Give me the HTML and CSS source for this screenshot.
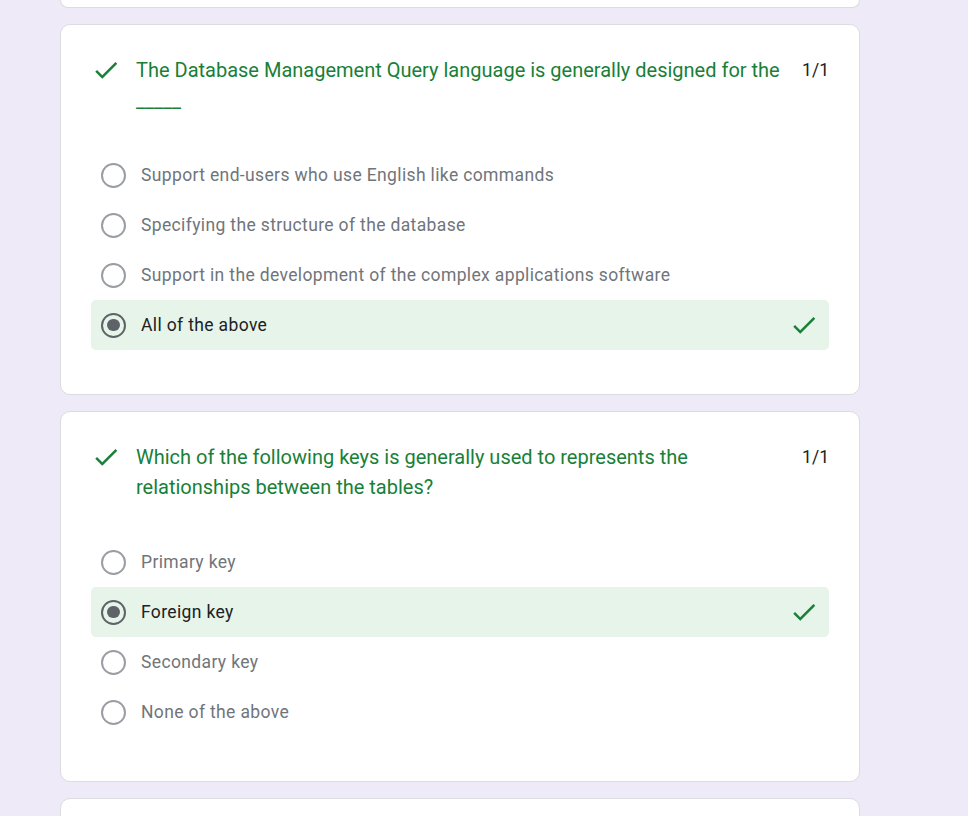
FILE: index.html
```html
<!DOCTYPE html>
<html lang="en">
<head>
<meta charset="utf-8">
<title>Quiz results</title>
<link rel="stylesheet" href="styles.css">
</head>
<body>
<main class="page">
  <section class="card card-clipped"></section>

  <section class="card">
    <div class="q-head">
      <svg class="q-mark" viewBox="0 0 24 24" aria-hidden="true"><path d="M9 16.17L4.830 12l-1.42 1.41L9 19 21 7l-1.41-1.41z"/></svg>
      <div class="q-title">The Database Management Query language is generally designed for the _____</div>
      <div class="q-points">1/1</div>
    </div>
    <div class="options">
      <div class="option"><span class="radio"></span><span class="opt-label">Support end-users who use English like commands</span></div>
      <div class="option"><span class="radio"></span><span class="opt-label">Specifying the structure of the database</span></div>
      <div class="option"><span class="radio"></span><span class="opt-label">Support in the development of the complex applications software</span></div>
      <div class="option option-correct"><span class="radio radio-on"></span><span class="opt-label">All of the above</span>
        <svg class="opt-mark" viewBox="0 0 24 24" aria-hidden="true"><path d="M9 16.17L4.83 12l-1.42 1.41L9 19 21 7l-1.41-1.41z"/></svg>
      </div>
    </div>
  </section>

  <section class="card">
    <div class="q-head">
      <svg class="q-mark" viewBox="0 0 24 24" aria-hidden="true"><path d="M9 16.17L4.83 12l-1.42 1.41L9 19 21 7l-1.41-1.41z"/></svg>
      <div class="q-title">Which of the following keys is generally used to represents the relationships between the tables?</div>
      <div class="q-points">1/1</div>
    </div>
    <div class="options">
      <div class="option"><span class="radio"></span><span class="opt-label">Primary key</span></div>
      <div class="option option-correct"><span class="radio radio-on"></span><span class="opt-label">Foreign key</span>
        <svg class="opt-mark" viewBox="0 0 24 24" aria-hidden="true"><path d="M9 16.17L4.83 12l-1.42 1.41L9 19 21 7l-1.41-1.41z"/></svg>
      </div>
      <div class="option"><span class="radio"></span><span class="opt-label">Secondary key</span></div>
      <div class="option"><span class="radio"></span><span class="opt-label">None of the above</span></div>
    </div>
  </section>

  <section class="card card-next"></section>
</main>
</body>
</html>
```

FILE: styles.css
```css
html, body {
  margin: 0;
  padding: 0;
  height: 100%;
  overflow: hidden;
  background: #eeeaf8;
  font-family: Roboto, "Liberation Sans", Arial, sans-serif;
}

.page {
  display: flex;
  flex-direction: column;
  gap: 16px;
  width: 800px;
  margin-left: 60px;
}

.card {
  box-sizing: border-box;
  width: 800px;
  background: #ffffff;
  border: 1px solid #dadce0;
  border-radius: 10px;
  padding: 30px 30px 44px 30px;
}

.card-clipped {
  height: 8px;
  padding: 0;
  border-top: none;
  border-radius: 0 0 10px 10px;
}

.card-next {
  height: 120px;
  padding: 0;
  flex: none;
}

.q-head {
  display: flex;
  align-items: flex-start;
}

.q-mark {
  flex: none;
  width: 30px;
  height: 30px;
  fill: #188038;
  margin-right: 15px;
}

.q-title {
  flex: 1;
  font-size: 20px;
  line-height: 30px;
  color: #188038;
}

.q-points {
  flex: none;
  padding-left: 15px;
  font-size: 17.5px;
  line-height: 30px;
  color: #202124;
}

.options {
  display: flex;
  flex-direction: column;
  margin-top: 35px;
}

.option {
  display: flex;
  align-items: center;
  gap: 15px;
  height: 50px;
  padding: 0 10px;
  border-radius: 5px;
}

.option-correct {
  background: #e6f4ea;
}

.radio {
  flex: none;
  box-sizing: border-box;
  width: 25px;
  height: 25px;
  border: 2.5px solid #9a9da2;
  border-radius: 50%;
  display: flex;
  align-items: center;
  justify-content: center;
}

.radio-on {
  border-color: #5f6368;
}

.radio-on::after {
  content: "";
  width: 12.5px;
  height: 12.5px;
  border-radius: 50%;
  background: #5f6368;
}

.opt-label {
  flex: 1;
  font-size: 17.5px;
  line-height: 25px;
  color: #70757a;
  letter-spacing: 0.36px;
}

.option-correct .opt-label {
  color: #202124;
}

.opt-mark {
  flex: none;
  width: 30px;
  height: 30px;
  fill: #188038;
}
```
